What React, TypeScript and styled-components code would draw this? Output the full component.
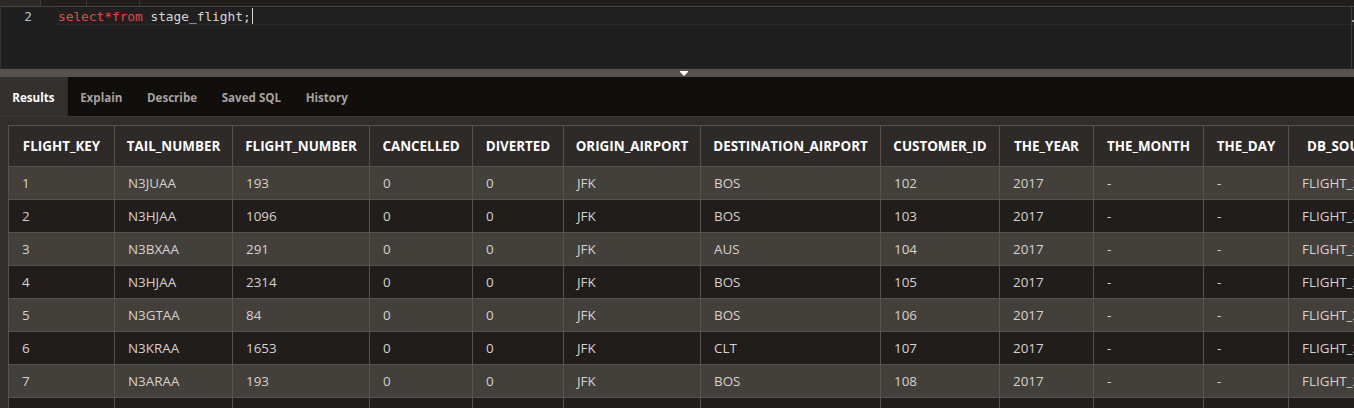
import React from "react";
import styled, { createGlobalStyle } from "styled-components";

const Global = createGlobalStyle`
  html, body { margin: 0; padding: 0; background: #312d2a; }
  body { width: 1354px; height: 408px; overflow: hidden; font-family: "Open Sans", "Liberation Sans", sans-serif; }
  #root { width: 1354px; height: 408px; overflow: hidden; }
`;

const Page = styled.div`
  display: flex;
  flex-direction: column;
  width: 1354px;
  height: 408px;
  overflow: hidden;
`;

const TopStrip = styled.div`
  height: 6px;
  background: #221e1b;
  border-bottom: 1px solid #4a4540;
  display: flex;
`;

const StripTab = styled.div<{ $w: number; $light?: boolean }>`
  width: ${(p) => p.$w}px;
  height: 6px;
  border-right: 1px solid #3a3632;
  background: ${(p) => (p.$light ? "#2c2825" : "transparent")};
`;

const Editor = styled.div`
  height: 61px;
  background: #1f1f1f;
  border-left: 1px solid #343434;
  display: flex;
  flex-direction: column;
  position: relative;
`;

const CodeLine = styled.div`
  display: flex;
  height: 18px;
  align-items: center;
  font-family: "DejaVu Sans Mono", "Liberation Mono", monospace;
  font-size: 12.8px;
`;

const Gutter = styled.div`
  width: 31px;
  flex: 0 0 31px;
  text-align: right;
  color: #b3c4d2;
  padding-right: 26px;
`;

const Code = styled.div`
  flex: 1;
  height: 16px;
  display: flex;
  align-items: center;
  background: #202020;
  border-top: 1px solid #1b1b1b;
  border-bottom: 1px solid #2b2b2b;
  color: #d6d6d6;
  white-space: pre;
`;

const Kw = styled.span`
  color: #e8463e;
`;

const Caret = styled.span`
  display: inline-block;
  width: 1px;
  height: 16px;
  background: #d8d8d8;
  margin-left: 1px;
`;

const ScrollEdge = styled.div`
  position: absolute;
  right: 2px;
  top: 0;
  bottom: 0;
  width: 1px;
  background: #3b3b3b;
  &::after {
    content: "";
    position: absolute;
    left: 1px;
    top: 13px;
    width: 2px;
    height: 2px;
    background: #9a9a9a;
  }
`;

const Splitter = styled.div`
  height: 9px;
  background: #57524d;
  border-top: 1px solid #2a2724;
  box-sizing: border-box;
  display: flex;
  justify-content: center;
  align-items: center;
`;

const Grip = styled.div`
  margin-left: 14px;
  margin-top: 1px;
  width: 0;
  height: 0;
  border-left: 4px solid transparent;
  border-right: 4px solid transparent;
  border-top: 4px solid #ffffff;
  position: relative;
  &::before {
    content: "";
    position: absolute;
    left: -4px;
    top: -5px;
    width: 8px;
    height: 1px;
    background: #ffffff;
  }
`;

const TabBar = styled.div`
  height: 39px;
  background: #100f0d;
  display: flex;
  border-bottom: 1px solid #3c3834;
`;

const Tab = styled.div<{ $active?: boolean }>`
  display: flex;
  align-items: center;
  padding: 1px 12.3px 0;
  font-size: 11.6px;
  font-weight: 700;
  color: ${(p) => (p.$active ? "#ffffff" : "#a7a29d")};
  background: ${(p) => (p.$active ? "#33302d" : "transparent")};
  border-right: ${(p) => (p.$active ? "1px solid #2a2724" : "none")};
`;

const ResultsArea = styled.div`
  flex: 1;
  background: #322e2b;
  padding: 8px 0 0 8px;
  overflow: hidden;
`;

const Table = styled.table`
  border-collapse: collapse;
  table-layout: fixed;
  width: 1500px;
  font-size: 13.4px;
`;

const HeadCell = styled.th<{ $w: number; $left?: boolean }>`
  width: ${(p) => p.$w}px;
  height: 41px;
  padding: 0;
  padding-left: ${(p) => (p.$left ? "18px" : "0")};
  background: #2e2a27;
  border: 1px solid #57524d;
  color: #ffffff;
  font-weight: 700;
  text-align: ${(p) => (p.$left ? "left" : "center")};
  white-space: nowrap;
  overflow: hidden;
  box-sizing: border-box;
`;

const Row = styled.tr<{ $odd: boolean }>`
  background: ${(p) => (p.$odd ? "#433f3a" : "#211d1b")};
`;

const Cell = styled.td`
  height: 33px;
  padding: 0 0 0 13px;
  border: 1px solid #57524d;
  color: #d6d2ce;
  white-space: nowrap;
  overflow: hidden;
  box-sizing: border-box;
`;

const columns: { name: string; w: number; left?: boolean }[] = [
  { name: "FLIGHT_KEY", w: 106 },
  { name: "TAIL_NUMBER", w: 118 },
  { name: "FLIGHT_NUMBER", w: 137 },
  { name: "CANCELLED", w: 103 },
  { name: "DIVERTED", w: 91 },
  { name: "ORIGIN_AIRPORT", w: 137 },
  { name: "DESTINATION_AIRPORT", w: 180 },
  { name: "CUSTOMER_ID", w: 119 },
  { name: "THE_YEAR", w: 94 },
  { name: "THE_MONTH", w: 110 },
  { name: "THE_DAY", w: 85 },
  { name: "DB_SOURCE", w: 220, left: true },
];

const rows: string[][] = [
  ["1", "N3JUAA", "193", "0", "0", "JFK", "BOS", "102", "2017", "-", "-", "FLIGHT_2017"],
  ["2", "N3HJAA", "1096", "0", "0", "JFK", "BOS", "103", "2017", "-", "-", "FLIGHT_2017"],
  ["3", "N3BXAA", "291", "0", "0", "JFK", "AUS", "104", "2017", "-", "-", "FLIGHT_2017"],
  ["4", "N3HJAA", "2314", "0", "0", "JFK", "BOS", "105", "2017", "-", "-", "FLIGHT_2017"],
  ["5", "N3GTAA", "84", "0", "0", "JFK", "BOS", "106", "2017", "-", "-", "FLIGHT_2017"],
  ["6", "N3KRAA", "1653", "0", "0", "JFK", "CLT", "107", "2017", "-", "-", "FLIGHT_2017"],
  ["7", "N3ARAA", "193", "0", "0", "JFK", "BOS", "108", "2017", "-", "-", "FLIGHT_2017"],
  ["", "", "", "", "", "", "", "", "", "", "", ""],
];

export default function App() {
  return (
    <Page>
      <Global />
      <TopStrip>
        <StripTab $w={40} $light />
        <StripTab $w={45} />
        <StripTab $w={52} />
      </TopStrip>
      <Editor>
        <CodeLine>
          <Gutter>2</Gutter>
          <Code>
            <Kw>select*from</Kw> stage_flight;<Caret />
          </Code>
        </CodeLine>
        <ScrollEdge />
      </Editor>
      <Splitter>
        <Grip />
      </Splitter>
      <TabBar>
        <Tab $active>Results</Tab>
        <Tab>Explain</Tab>
        <Tab>Describe</Tab>
        <Tab>Saved SQL</Tab>
        <Tab>History</Tab>
      </TabBar>
      <ResultsArea>
        <Table>
          <thead>
            <tr>
              {columns.map((c) => (
                <HeadCell key={c.name} $w={c.w} $left={c.left}>
                  {c.name}
                </HeadCell>
              ))}
            </tr>
          </thead>
          <tbody>
            {rows.map((r, i) => (
              <Row key={i} $odd={i % 2 === 0}>
                {r.map((v, j) => (
                  <Cell key={j}>{v}</Cell>
                ))}
              </Row>
            ))}
          </tbody>
        </Table>
      </ResultsArea>
    </Page>
  );
}
